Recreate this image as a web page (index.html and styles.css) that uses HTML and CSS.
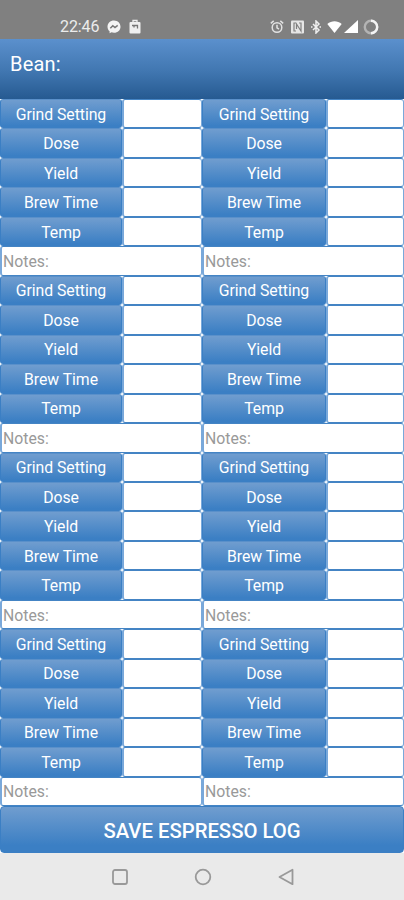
FILE: index.html
```
<!DOCTYPE html>
<html lang="en">
<head>
    <meta charset="utf-8">
    <title>Espresso Log</title>
    <link rel="stylesheet" href="styles.css">
</head>
<body>
    <div class="status-bar">
        <div class="status-left">
            <span class="clock">22:46</span>
            <svg class="messenger" width="14" height="14" viewBox="0 0 14 14"><path fill="#f4f4f4" d="M7 .5C3.200.5.5 3.200.5 6.700c0 1.900.8 3.500 2.100 4.600v2l1.900-1c.8.3 1.600.4 2.500.4 3.800 0 6.500-2.600 6.500-6S10.800.5 7 .5z"/><path fill="none" stroke="#777" stroke-width="1.500" d="M3.300 8.200l2.500-2.500 2.200 1.800 2.700-2.100"/></svg>
            <svg class="bag" width="12" height="15" viewBox="0 0 12 15"><path fill="none" stroke="#f0f0f0" stroke-width="1.300" d="M4 4V1.500h4V4"/><rect x=".5" y="3" width="11" height="11.500" rx="1" fill="#f0f0f0"/><path fill="none" stroke="#777" stroke-width="1.300" d="M3 6.500h5.500v3M5 6.500v2"/></svg>
        </div>
        <div class="status-right">
            <svg width="14" height="14" viewBox="0 0 14 14"><g fill="none" stroke="#e2e2e2" stroke-width="1.500"><circle cx="7" cy="7.500" r="4.800"/><path d="M.8 3.300L3.700.9M13.200 3.300L10.300.9M7 4.800v3l2 1.300"/></g></svg>
            <svg class="nfc" width="13" height="14" viewBox="0 0 13 14"><rect x="0" y=".5" width="13" height="13" rx="1" fill="#e6e6e6"/><path fill="none" stroke="#808080" stroke-width="1.200" d="M5 3H3v8h2M8 3h2v8L5.500 4v5"/></svg>
            <svg class="bluetooth" width="10" height="14" viewBox="0 0 10 14"><path fill="none" stroke="#eee" stroke-width="1.500" d="M2 4l6 6-3 3V1l3 3-6 6"/><path stroke="#eee" stroke-width="1.500" d="M0 7h1.500M8.500 7H10"/></svg>
            <svg class="wifi" width="15" height="12" viewBox="0 0 15 12"><path fill="#fff" d="M.3 3C4.500-.6 10.500-.6 14.700 3L7.500 12z"/></svg>
            <svg class="signal" width="14" height="13" viewBox="0 0 14 13"><path fill="#fff" d="M14 0v13H0z"/></svg>
            <svg class="battery" width="16" height="16" viewBox="0 0 16 16"><circle cx="8" cy="8" r="6.200" fill="none" stroke="#b4b4b4" stroke-width="2.400"/><path fill="none" stroke="#f4f4f4" stroke-width="2.400" d="M8 1.800a6.200 6.200 0 1 1 0 12.400"/></svg>
        </div>
    </div>

    <div class="header">Bean:</div>

    <div class="log">
        <div class="shot">
            <div class="label">Grind Setting</div><div class="field"></div>
            <div class="label">Dose</div><div class="field"></div>
            <div class="label">Yield</div><div class="field"></div>
            <div class="label">Brew Time</div><div class="field"></div>
            <div class="label">Temp</div><div class="field"></div>
            <div class="notes">Notes:</div>
        </div>
        <div class="shot">
            <div class="label">Grind Setting</div><div class="field"></div>
            <div class="label">Dose</div><div class="field"></div>
            <div class="label">Yield</div><div class="field"></div>
            <div class="label">Brew Time</div><div class="field"></div>
            <div class="label">Temp</div><div class="field"></div>
            <div class="notes">Notes:</div>
        </div>
        <div class="shot">
            <div class="label">Grind Setting</div><div class="field"></div>
            <div class="label">Dose</div><div class="field"></div>
            <div class="label">Yield</div><div class="field"></div>
            <div class="label">Brew Time</div><div class="field"></div>
            <div class="label">Temp</div><div class="field"></div>
            <div class="notes">Notes:</div>
        </div>
        <div class="shot">
            <div class="label">Grind Setting</div><div class="field"></div>
            <div class="label">Dose</div><div class="field"></div>
            <div class="label">Yield</div><div class="field"></div>
            <div class="label">Brew Time</div><div class="field"></div>
            <div class="label">Temp</div><div class="field"></div>
            <div class="notes">Notes:</div>
        </div>
        <div class="shot">
            <div class="label">Grind Setting</div><div class="field"></div>
            <div class="label">Dose</div><div class="field"></div>
            <div class="label">Yield</div><div class="field"></div>
            <div class="label">Brew Time</div><div class="field"></div>
            <div class="label">Temp</div><div class="field"></div>
            <div class="notes">Notes:</div>
        </div>
        <div class="shot">
            <div class="label">Grind Setting</div><div class="field"></div>
            <div class="label">Dose</div><div class="field"></div>
            <div class="label">Yield</div><div class="field"></div>
            <div class="label">Brew Time</div><div class="field"></div>
            <div class="label">Temp</div><div class="field"></div>
            <div class="notes">Notes:</div>
        </div>
        <div class="shot">
            <div class="label">Grind Setting</div><div class="field"></div>
            <div class="label">Dose</div><div class="field"></div>
            <div class="label">Yield</div><div class="field"></div>
            <div class="label">Brew Time</div><div class="field"></div>
            <div class="label">Temp</div><div class="field"></div>
            <div class="notes">Notes:</div>
        </div>
        <div class="shot">
            <div class="label">Grind Setting</div><div class="field"></div>
            <div class="label">Dose</div><div class="field"></div>
            <div class="label">Yield</div><div class="field"></div>
            <div class="label">Brew Time</div><div class="field"></div>
            <div class="label">Temp</div><div class="field"></div>
            <div class="notes">Notes:</div>
        </div>
    </div>

    <button class="save" type="button">SAVE ESPRESSO LOG</button>

    <div class="nav-bar">
        <svg width="18" height="18" viewBox="0 0 18 18"><rect x="2" y="2" width="14" height="14" rx="2"/></svg>
        <svg width="18" height="18" viewBox="0 0 18 18"><circle cx="9" cy="9" r="7.300"/></svg>
        <svg width="18" height="18" viewBox="0 0 18 18"><path d="M15.500 1.800v14.400L2.500 9z"/></svg>
    </div>
</body>
</html>
```

FILE: styles.css
```
:root {
    --blue: #3b7fc4;
    --blue-light: #709dcf;
    --line: #4484c4;
    --line-light: #79a8da;
}
* { box-sizing: border-box; }
body { margin: 0; width: 404px; height: 900px; display: flex; flex-direction: column; overflow: hidden; background: #fff; font-family: Roboto, sans-serif; color: #fff; }
svg { display: block; flex: none; }

.status-bar { height: 39px; flex: none; display: flex; justify-content: space-between; padding: 13px 25px 0 60px; background: #808080; }
.status-left, .status-right { display: flex; align-items: center; height: 27px; }
.clock { width: 40px; font-size: 16px; letter-spacing: -0.1px; color: #ececec; }
.messenger { margin-left: 7px; }
.bag { margin-left: 8px; }
.nfc { margin-left: 7px; }
.bluetooth { margin-left: 7px; }
.wifi { margin-left: 6px; }
.signal { margin-left: 2px; }
.battery { margin-left: 5px; }

.header { height: 60px; flex: none; padding: 12px 10px; font-size: 20px; line-height: 26px; letter-spacing: 0.2px; background: linear-gradient(#5b90cd, #4076b0 55%, #265a91); }

/* two shots per row, the rounded cell corners leave white dots where they meet */
.log { height: 707px; flex: none; display: grid; grid-template-columns: 202px 202px; grid-template-rows: repeat(4, 1fr); }
.shot { display: grid; grid-template-columns: 122px 80px; grid-template-rows: repeat(6, 1fr); }
.shot:nth-child(even) { grid-template-columns: 124px 78px; }
.label { display: flex; align-items: center; justify-content: center; padding-top: 1px; border: 1px solid var(--blue); border-top-color: #5a90ca; border-radius: 3px; background: linear-gradient(var(--blue-light), var(--blue) 95%); font-size: 15.8px; letter-spacing: -0.05px; }
.field, .notes { border: 1px solid var(--line); border-right-color: var(--line-light); border-radius: 3px; background: #fff; }
.field { border-left: 2px solid var(--line-light); }
.notes { grid-column: 1 / 3; display: flex; align-items: center; padding: 1px 0 0 1px; border-left: 2px solid var(--line-light); font-size: 15.8px; letter-spacing: 0; color: #999; }

.save { height: 47px; flex: none; margin: 0; padding: 2px 0 0; border: 1px solid var(--blue); border-radius: 4px; background: linear-gradient(var(--blue-light), var(--blue) 85%); color: #fff; font-family: inherit; font-size: 20.3px; font-weight: 500; }

.nav-bar { flex: 1; display: flex; align-items: center; justify-content: center; gap: 65px; padding-left: 1px; background: #eaeaea; }
.nav-bar svg { fill: none; stroke: #999; stroke-width: 1.8; stroke-linejoin: round; }
```
